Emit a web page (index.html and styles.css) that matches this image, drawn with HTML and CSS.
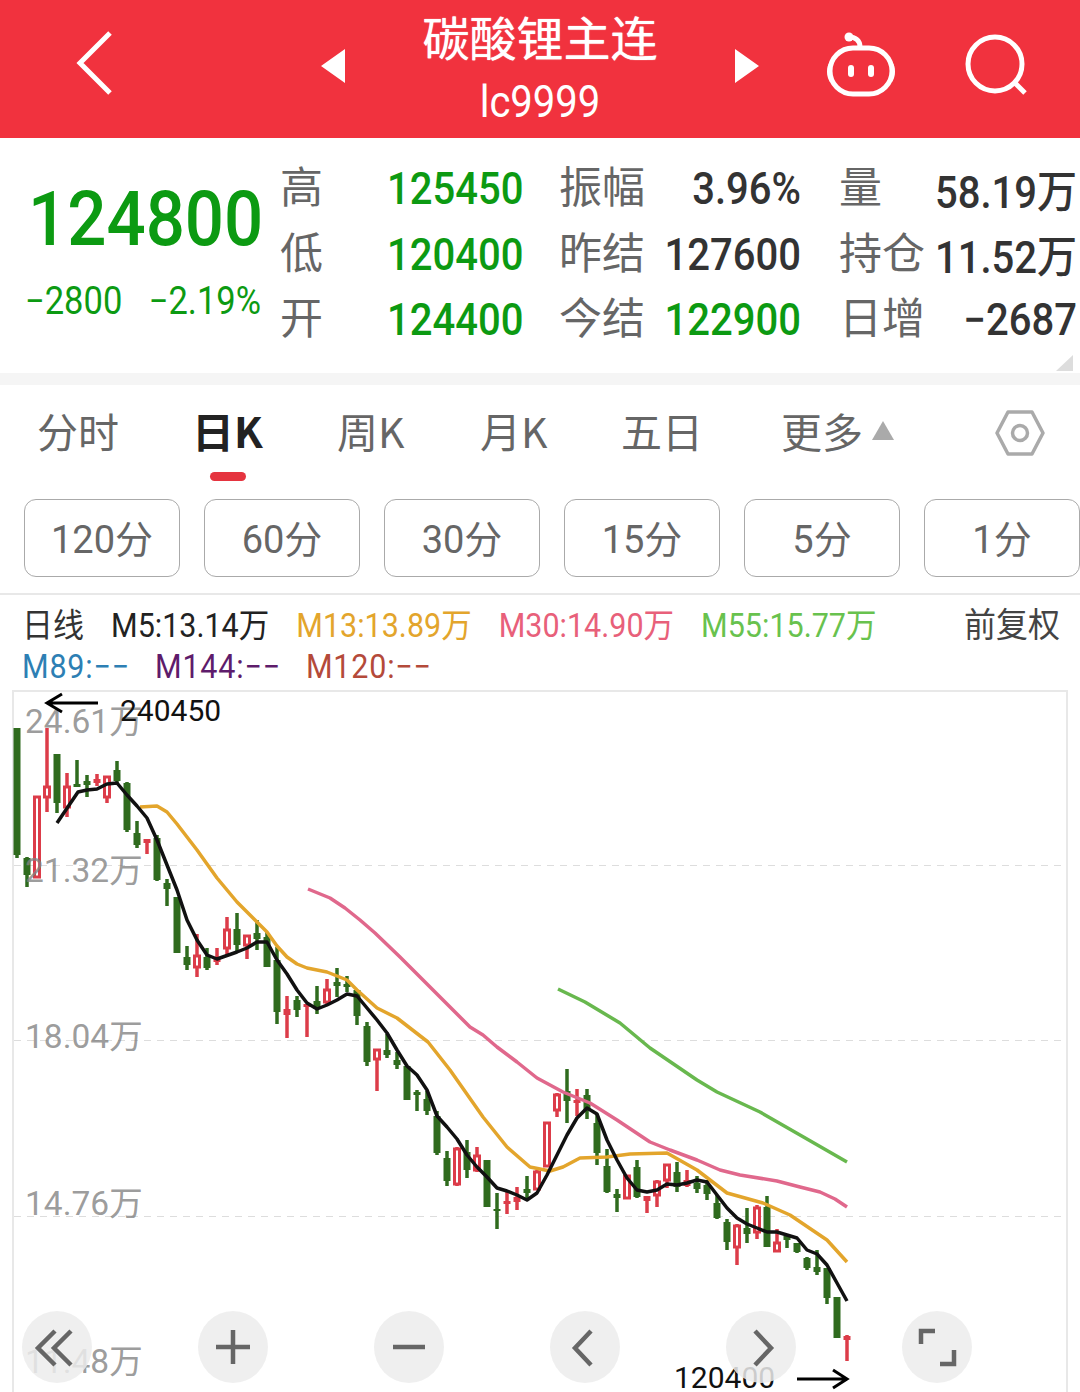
FILE: index.html
```html
<!DOCTYPE html>
<html lang="zh-CN">
<head>
	<meta charset="UTF-8">
	<title>碳酸锂主连</title>
	<link rel="stylesheet" href="styles.css">
</head>
<body>

	<header class="topbar">
		<svg class="topbar__icons" viewBox="0 0 1080 138">
			<path class="icon__line" d="M110 33 80 63l30 30"/>
			<path class="icon__fill" d="M345 49v34l-24-17zM735 49v34l24-17z"/>
			<rect class="icon__line" x="830" y="48" width="62" height="46" rx="23"/>
			<path class="icon__line" d="M849 37c6 0 11 3 11 10"/>
			<circle class="icon__fill" cx="849" cy="37" r="4.5"/>
			<path class="icon__fill" d="M830 62c-4 4-4 15 0 20zM892 62c4 4 4 15 0 20z"/>
			<rect class="icon__fill" x="848" y="65" width="6" height="12" rx="3"/>
			<rect class="icon__fill" x="868" y="65" width="6" height="12" rx="3"/>
			<circle class="icon__line" cx="995" cy="64" r="27"/>
			<path class="icon__line" d="m1015 83 10 10"/>
		</svg>
		<div class="topbar__title">
			<div class="topbar__name">碳酸锂主连</div>
			<div class="topbar__code">lc9999</div>
		</div>
	</header>

	<section class="quote">
		<div class="quote__main">
			<div class="quote__price">124800</div>
			<div class="quote__change"><span>−2800</span><span>−2.19%</span></div>
		</div>
		<div class="quote__grid">
			<span class="lbl">高</span><span class="val val--down">125450</span>
			<span class="lbl lbl--gap">振幅</span><span class="val">3.96%</span>
			<span class="lbl lbl--gap">量</span><span class="val">58.19万</span>

			<span class="lbl">低</span><span class="val val--down">120400</span>
			<span class="lbl lbl--gap">昨结</span><span class="val">127600</span>
			<span class="lbl lbl--gap">持仓</span><span class="val">11.52万</span>

			<span class="lbl">开</span><span class="val val--down">124400</span>
			<span class="lbl lbl--gap">今结</span><span class="val val--down">122900</span>
			<span class="lbl lbl--gap">日增</span><span class="val">−2687</span>
		</div>
		<i class="quote__corner"></i>
	</section>

	<nav class="tabs">
		<a class="tabs__item">分时</a>
		<a class="tabs__item tabs__item--on">日K</a>
		<a class="tabs__item">周K</a>
		<a class="tabs__item">月K</a>
		<a class="tabs__item">五日</a>
		<a class="tabs__item tabs__more">更多<i class="tabs__arrow"></i></a>
		<svg class="tabs__gear" viewBox="0 0 50 46">
			<path d="M13 2h24l11 21-11 21H13L2 23z"/>
			<circle cx="25" cy="23" r="7.500"/>
		</svg>
	</nav>

	<div class="periods">
		<button class="periods__btn">120分</button>
		<button class="periods__btn">60分</button>
		<button class="periods__btn">30分</button>
		<button class="periods__btn">15分</button>
		<button class="periods__btn">5分</button>
		<button class="periods__btn">1分</button>
	</div>

	<div class="legend">
		<div class="legend__row">
			<span class="legend__name">日线</span>
			<span class="c-m5">M5:13.14万</span>
			<span class="c-m13">M13:13.89万</span>
			<span class="c-m30">M30:14.90万</span>
			<span class="c-m55">M55:15.77万</span>
			<span class="legend__adj">前复权</span>
		</div>
		<div class="legend__row legend__row--empty">
			<span class="c-m89">M89:−−</span>
			<span class="c-m144">M144:−−</span>
			<span class="c-m120">M120:−−</span>
		</div>
	</div>

	<main class="chart">
		<svg class="chart__svg" viewBox="0 690 1080 702">
			<rect class="chart__frame" x="13" y="691" width="1054" height="720"/>
			<path class="chart__grid" d="M14 865.500H1066M14 1040.500H1066M14 1216.500H1066"/>
			<g id="candles"></g>
			<polyline class="ma ma--55" points="558,989 585,1002 620,1023 650,1048 697,1080 717,1092 760,1112 800,1135 847,1162"/>
			<polyline class="ma ma--30" points="308,889 330,898 345,908 360,920 375,933 400,957 420,977 450,1007 470,1027 483,1035 497,1047 517,1062 537,1078 563,1092 590,1103 617,1120 650,1142 670,1150 697,1160 720,1170 740,1175 777,1181 800,1187 820,1192 835,1199 847,1207"/>
			<polyline class="ma ma--13" points="140,807 157,806 167,812 177,824 197,850 217,878 237,902 257,922 267,932 277,946 287,957 297,964 307,968 327,972 347,980 357,990 377,1008 397,1018 428,1042 450,1070 483,1117 507,1147 530,1167 550,1171 563,1167 580,1158 607,1157 630,1154 667,1153 697,1170 727,1193 763,1203 790,1215 827,1240 847,1262"/>
			<polyline class="ma ma--5" points="57,823 78,792 87,790 97,789 107,784 117,783 127,795 137,806 147,818 157,840 167,865 177,890 187,920 197,940 207,955 217,959 237,952 247,948 257,942 267,942 277,960 287,974 297,990 307,1003 317,1009 327,1005 337,1000 347,994 357,996 367,1008 377,1020 387,1033 397,1050 407,1066 417,1075 427,1090 437,1116 447,1127 457,1139 467,1155 477,1167 487,1177 497,1188 507,1191 517,1195 527,1200 537,1193 547,1175 557,1155 567,1135 577,1118 587,1108 597,1114 607,1140 617,1160 627,1178 637,1190 647,1192 657,1190 667,1184 677,1185 687,1183 697,1180 707,1182 717,1195 727,1208 737,1218 747,1224 757,1228 767,1232 777,1232 787,1235 797,1238 807,1250 817,1254 827,1265 837,1283 847,1301"/>
			<text class="chart__axis" x="25" y="733">24.61万</text>
			<text class="chart__axis" x="25" y="882">21.32万</text>
			<text class="chart__axis" x="25" y="1048">18.04万</text>
			<text class="chart__axis" x="25" y="1215">14.76万</text>
			<text class="chart__axis" x="25" y="1373">11.48万</text>
			<text class="chart__mark" x="120" y="721">240450</text>
			<text class="chart__mark" x="674" y="1388">120400</text>
			<path class="chart__arrow" d="M98 703H48m14-9-15 9 15 9"/>
			<path class="chart__arrow" d="M797 1379h50m-14-9 14 9-14 9"/>
		</svg>
		<div class="tools">
			<button class="tools__btn"><svg viewBox="0 0 70 70"><path d="M33 19 16 36l17 17M49 19 32 36l17 17"/></svg></button>
			<button class="tools__btn"><svg viewBox="0 0 70 70"><path d="M35 18v34M18 35h34"/></svg></button>
			<button class="tools__btn"><svg viewBox="0 0 70 70"><path d="M19 35h32"/></svg></button>
			<button class="tools__btn"><svg viewBox="0 0 70 70"><path d="M41 19 25 36l16 17"/></svg></button>
			<button class="tools__btn"><svg viewBox="0 0 70 70"><path d="M29 19l16 17-16 17"/></svg></button>
			<button class="tools__btn"><svg viewBox="0 0 70 70"><path d="M19 32V19h14M52 38v14H38"/></svg></button>
		</div>
	</main>

	<script src="chart.js"></script>
</body>
</html>
```

FILE: styles.css
```css
* {
	margin: 0;
	padding: 0;
	box-sizing: border-box;
}

body {
	width: 1080px;
	height: 1392px;
	overflow: hidden;
	background: #fff;
	font-family: Roboto, "Noto Sans CJK SC", sans-serif;
}

/* barra roja */
.topbar {
	position: relative;
	height: 138px;
	background: #f1323e;
	color: #fff;
	text-align: center;
}

.topbar__icons {
	position: absolute;
	left: 0;
	top: 0;
	width: 1080px;
	height: 138px;
}

.icon__line {
	fill: none;
	stroke: #fff;
	stroke-width: 5;
}

.icon__fill {
	fill: #fff;
}

.topbar__name {
	padding-top: 7px;
	font-size: 47px;
	line-height: 58px;
	font-family: "Noto Sans CJK SC", sans-serif;
	text-shadow: 0 0 1px #fff;
}

.topbar__code {
	font-size: 40px;
	line-height: 76px;
	transform: scaleY(1.1);
}

/* cotizacion */
.quote {
	position: relative;
	height: 247px;
	display: flex;
	border-bottom: 12px solid #f5f5f5;
	overflow: hidden;
}

.quote__main {
	flex: none;
	width: 281px;
	padding: 42px 0 0 25px;
	color: #0c9a12;
}

.quote__price {
	font-size: 69px;
	line-height: 80px;
	padding-left: 3px;
	font-weight: 500;
	transform: scaleY(1.1);
}

.quote__change {
	display: flex;
	justify-content: space-between;
	width: 236px;
	margin-top: 21px;
	font-size: 34.500px;
	line-height: 40px;
	transform: scaleY(1.1);
}

.quote__grid {
	flex: none;
	margin-left: -1px;
	display: grid;
	grid-template-columns: 107px 134px 125px 155px 125px 151px;
	grid-auto-rows: 65.500px;
	padding-top: 16px;
	align-items: center;
}

.lbl {
	padding-bottom: 5px;
	font-size: 43px;
	line-height: 60px;
	color: #666;
	font-family: "Noto Sans CJK SC", sans-serif;
}

.lbl--gap {
	padding-left: 38px;
}

.val {
	padding-top: 4px;
	font-size: 40px;
	font-weight: 500;
	color: #333;
	text-align: right;
	white-space: nowrap;
	transform: scaleY(1.1);
}

.val--down {
	color: #0c9a12;
}

.quote__corner {
	position: absolute;
	right: 7px;
	bottom: 2px;
	border-style: solid;
	border-width: 0 0 16px 17px;
	border-color: transparent transparent #ddd transparent;
}

/* pestanas */
.tabs {
	position: relative;
	height: 114px;
	display: grid;
	grid-template-columns: 158px 142px 143px 141px 160px 1fr;
	padding: 20px 0 0 37px;
	align-items: start;
	font-family: "Noto Sans CJK SC", sans-serif;
}

.tabs__item {
	font-size: 41px;
	line-height: 50px;
	color: #666;
}

.tabs__item--on {
	position: relative;
	margin-left: -3px;
	font-size: 42px;
	color: #222;
	font-weight: 700;
}

.tabs__item--on::after {
	content: "";
	position: absolute;
	left: 18px;
	top: 67px;
	width: 36px;
	height: 9px;
	border-radius: 5px;
	background: #e5343f;
}

.tabs__more {
	display: flex;
	align-items: center;
}

.tabs__arrow {
	margin-left: 9px;
	border-style: solid;
	border-width: 0 11px 19px;
	border-color: transparent transparent #aaa;
}

.tabs__gear {
	position: absolute;
	left: 995px;
	top: 25px;
	width: 50px;
	height: 46px;
	fill: none;
	stroke: #aaa;
	stroke-width: 3.500;
	stroke-linejoin: round;
}

.periods {
	display: flex;
	gap: 24px;
	padding-left: 24px;
	height: 96px;
	border-bottom: 2px solid #e8e8e8;
}

.periods__btn {
	flex: none;
	width: 156px;
	height: 78px;
	padding-bottom: 4px;
	background: #fff;
	border: 1.500px solid #aaa;
	border-radius: 12px;
	font: inherit;
	font-size: 38px;
	color: #666;
}

.legend {
	height: 95px;
	padding: 10px 0 0 22px;
	font-size: 30.500px;
}

.legend__row {
	display: flex;
	height: 41px;
	line-height: 41px;
	gap: 27px;
	transform: scaleY(1.08);
}

.legend__row--empty {
	gap: 25px;
	letter-spacing: .8px;
}

.legend__name {
	font-size: 31px;
	color: #333;
}

.legend__adj {
	margin-left: auto;
	margin-right: 20px;
	font-size: 32px;
	color: #444;
}

.c-m5 { color: #222; }
.c-m13 { color: #e3a52c; }
.c-m30 { color: #e8607a; }
.c-m55 { color: #68c24e; }
.c-m89 { color: #2d7fb4; }
.c-m144 { color: #5e1c6b; }
.c-m120 { color: #b44a3a; }

/* grafico */
.chart {
	position: relative;
	height: 702px;
}

.chart__svg {
	display: block;
	width: 1080px;
	height: 702px;
}

.chart__frame {
	fill: none;
	stroke: #e8e8e8;
	stroke-width: 2;
}

.chart__grid {
	fill: none;
	stroke: #ddd;
	stroke-width: 1;
	stroke-dasharray: 7 6;
}

.wick {
	stroke-width: 3.500;
}

.candle--g {
	stroke: #2f6b1e;
	fill: #2f6b1e;
}

.candle--r {
	stroke: #dc3c49;
	fill: #dc3c49;
}

.body--hollow {
	fill: #fff;
	stroke-width: 3;
}

.ma {
	fill: none;
	stroke-width: 3.500;
	stroke-linejoin: round;
}

.ma--5 { stroke: #111; }
.ma--13 { stroke: #e3a52c; }
.ma--30 { stroke: #e0688c; }
.ma--55 { stroke: #68b84e; }

.chart__axis {
	font-size: 33.500px;
	fill: rgba(130, 130, 130, .8);
}

.chart__mark {
	font-size: 30px;
	fill: #111;
}

.chart__arrow {
	fill: none;
	stroke: #000;
	stroke-width: 3;
}

.tools {
	position: absolute;
	left: 22px;
	top: 621px;
	display: flex;
	gap: 106px;
}

.tools__btn {
	width: 70px;
	height: 72px;
	border: 0;
	border-radius: 50%;
	background: rgba(236, 236, 236, .85);
}

.tools__btn svg {
	display: block;
	width: 70px;
	height: 70px;
	fill: none;
	stroke: #666;
	stroke-width: 4.500;
}
```

FILE: chart.js
```js
// velas: tipo, mecha arriba, mecha abajo, cuerpo arriba, cuerpo abajo, hueca
const velas = [
	["g",728,858,728,855],["g",857,887,858,875],["r",797,877,797,877,1],["r",728,812,787,797,1],
	["g",754,813,754,803],["r",773,817,787,807,1],["g",760,787,784,787],["g",775,797,781,785],
	["r",774,786,779,783],["r",776,803,777,797,1],["g",761,783,770,781],["g",782,832,783,830],
	["g",821,848,833,845],["r",839,854,839,843],["g",835,881,838,880],["g",879,906,883,889],
	["g",897,953,897,953],["g",946,970,957,965],["r",934,977,956,967,1],["g",948,970,957,968],
	["r",948,965,959,962],["r",917,955,930,948,1],["g",913,951,929,945],["r",935,959,936,945,1],
	["g",920,950,933,939],["g",932,967,937,967],["g",947,1024,960,1012],["r",996,1038,1009,1015],
	["g",996,1017,1000,1010],["r",1004,1037,1004,1007],["g",986,1014,1001,1009],["r",979,1005,990,1002,1],
	["g",968,997,982,986],["g",976,992,984,987],["g",990,1025,990,1016],["g",1022,1066,1026,1062],
	["r",1049,1091,1050,1059,1],["g",1034,1058,1050,1055],["g",1052,1069,1060,1065],["g",1066,1100,1066,1100],
	["g",1090,1111,1092,1095],["g",1091,1115,1099,1111],["g",1111,1155,1116,1153],["g",1151,1186,1158,1181],
	["r",1147,1186,1149,1184,1],["g",1140,1178,1152,1170],["r",1147,1172,1156,1170,1],["g",1160,1207,1160,1207],
	["g",1193,1229,1209,1211],["r",1190,1214,1201,1204],["r",1187,1210,1197,1202],["g",1176,1200,1189,1193],
	["r",1170,1190,1172,1189,1],["r",1122,1167,1123,1166,1],["r",1093,1117,1095,1110,1],["g",1069,1123,1091,1101],
	["r",1089,1116,1100,1103],["g",1089,1119,1095,1110],["g",1115,1165,1123,1153],["g",1149,1193,1166,1192],
	["g",1189,1212,1194,1198],["r",1175,1199,1176,1198,1],["g",1160,1198,1167,1197],["r",1196,1213,1196,1201],
	["r",1180,1207,1182,1195,1],["r",1164,1188,1165,1180,1],["g",1162,1192,1172,1187],["r",1170,1187,1180,1186],
	["g",1176,1193,1183,1189],["g",1180,1200,1185,1194],["g",1195,1219,1203,1218],["g",1219,1250,1222,1242],
	["r",1224,1265,1226,1247,1],["g",1208,1243,1228,1234],["r",1205,1239,1208,1232,1],["g",1196,1247,1207,1247],
	["r",1229,1252,1243,1251,1],["g",1234,1248,1236,1240],["g",1243,1253,1243,1252],["g",1257,1270,1258,1268],
	["g",1250,1275,1267,1272],["g",1268,1304,1268,1298],["g",1297,1338,1297,1338],["r",1335,1361,1336,1340]
];

const NS = "http://www.w3.org/2000/svg";

function crear(tag, attrs, padre) {
	const el = document.createElementNS(NS, tag);
	for (const k in attrs) el.setAttribute(k, attrs[k]);
	padre.appendChild(el);
	return el;
}

velas.forEach((v, i) => {
	const x = 17 + i * 10;
	const g = crear("g", { class: "candle--" + v[0] }, candles);
	crear("line", { class: "wick", x1: x, x2: x, y1: v[1], y2: v[2] }, g);
	if (v[5]) {
		crear("rect", { class: "body--hollow", x: x - 2.5, y: v[3], width: 5, height: v[4] - v[3] }, g);
	} else {
		crear("rect", { x: x - 3.5, y: v[3], width: 7, height: v[4] - v[3], stroke: "none" }, g);
	}
});
```
